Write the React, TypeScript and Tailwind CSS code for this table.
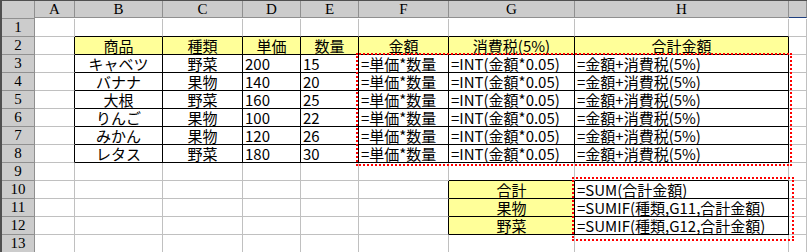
import React from 'react'

const cols = ['A', 'B', 'C', 'D', 'E', 'F', 'G', 'H', 'I']

type Cell = { text: string; align?: 'left' | 'center'; yellow?: boolean }

const data: Record<number, Record<number, Cell>> = {
    2: {
        1: { text: '商品', align: 'center', yellow: true },
        2: { text: '種類', align: 'center', yellow: true },
        3: { text: '単価', align: 'center', yellow: true },
        4: { text: '数量', align: 'center', yellow: true },
        5: { text: '金額', align: 'center', yellow: true },
        6: { text: '消費税(5%)', align: 'center', yellow: true },
        7: { text: '合計金額', align: 'center', yellow: true },
    },
    10: {
        6: { text: '合計', align: 'center', yellow: true },
        7: { text: '=SUM(合計金額)' },
    },
    11: {
        6: { text: '果物', align: 'center', yellow: true },
        7: { text: '=SUMIF(種類,G11,合計金額)' },
    },
    12: {
        6: { text: '野菜', align: 'center', yellow: true },
        7: { text: '=SUMIF(種類,G12,合計金額)' },
    },
}

const items = [
    ['キャベツ', '野菜', '200', '15'],
    ['バナナ', '果物', '140', '20'],
    ['大根', '野菜', '160', '25'],
    ['りんご', '果物', '100', '22'],
    ['みかん', '果物', '120', '26'],
    ['レタス', '野菜', '180', '30'],
]

items.forEach((it, i) => {
    data[i + 3] = {
        1: { text: it[0], align: 'center' },
        2: { text: it[1], align: 'center' },
        3: { text: it[2] },
        4: { text: it[3] },
        5: { text: '=単価*数量' },
        6: { text: '=INT(金額*0.05)' },
        7: { text: '=金額+消費税(5%)' },
    }
})

function inTable(r: number, c: number) {
    return (r >= 2 && r <= 8 && c >= 1 && c <= 7) || (r >= 10 && r <= 12 && c >= 6 && c <= 7)
}

export default function App() {
    const rows = Array.from({ length: 13 }, (_, i) => i + 1)

    return (
        <div
            className="relative h-[252px] w-[807px] overflow-hidden border-l-2 border-t border-[#505050] bg-white text-[15px] text-black"
            style={{ fontFamily: '"Noto Sans CJK JP", "Noto Sans", sans-serif' }}
        >
            <div className="grid grid-cols-[33px_40px_88px_80px_58px_58px_90px_126px_214px_1fr] auto-rows-[18px]">
                {/* column header */}
                <div className="border-b border-r border-[#909090] bg-[#cccccc]" />
                {cols.map((c) => (
                    <div
                        key={c}
                        className={
                            c === 'I'
                                ? 'flex h-[17px] items-center justify-center border-b border-r border-b-[#1f3f7f] border-r-[#909090] bg-[#cccccc]'
                                : 'flex h-[17px] items-center justify-center border-b border-r border-[#909090] bg-[#cccccc] font-["Liberation_Serif"] leading-none'
                        }
                    >
                        {c === 'I' ? '' : c}
                    </div>
                ))}

                {rows.map((r) => (
                    <React.Fragment key={r}>
                        <div className="flex items-center justify-center border-b border-r border-[#909090] bg-[#cccccc] font-['Liberation_Serif'] leading-none">
                            {r}
                        </div>
                        {cols.map((_, c) => {
                            const cell = data[r]?.[c]
                            const rightBlack = inTable(r, c) || inTable(r, c + 1)
                            const bottomBlack = inTable(r, c) || inTable(r + 1, c)
                            return (
                                <div
                                    key={c}
                                    className={[
                                        'flex items-center overflow-visible whitespace-nowrap border-b border-r leading-none',
                                        rightBlack ? 'border-r-black' : 'border-r-[#c0c0c0]',
                                        bottomBlack ? 'border-b-black' : 'border-b-[#c0c0c0]',
                                        cell?.yellow ? 'bg-[#ffff99]' : '',
                                        cell?.align === 'center' ? 'justify-center' : 'pl-[2px]',
                                    ].join(' ')}
                                >
                                    {cell?.text}
                                </div>
                            )
                        })}
                    </React.Fragment>
                ))}
            </div>

            {/* copy marquees */}
            <div className="pointer-events-none absolute left-[354px] top-[52px] h-[113px] w-[436px] border-2 border-dotted border-[#ff0000]" />
            <div className="pointer-events-none absolute left-[570px] top-[176px] h-[64px] w-[222px] border-2 border-dotted border-[#ff0000]" />
        </div>
    )
}
